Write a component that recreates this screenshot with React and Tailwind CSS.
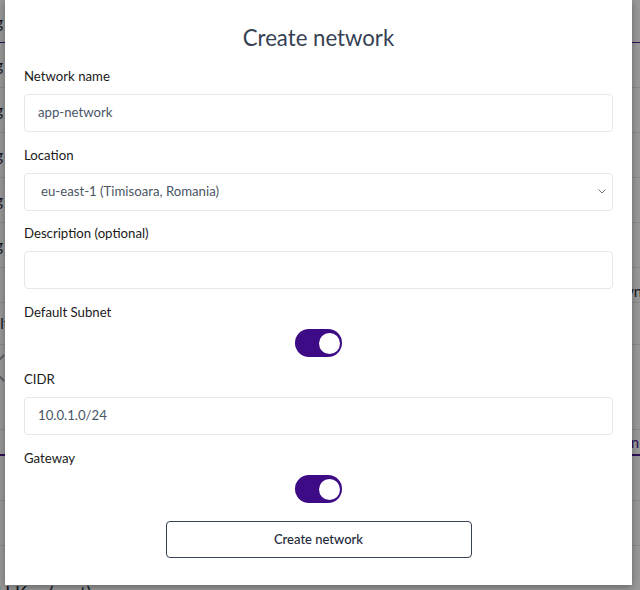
import React from 'react'

function Toggle() {
  return (
    <div className="flex justify-center">
      <div className="w-[47px] h-[28px] rounded-full bg-[#3d0b86] flex items-center justify-end pr-[2px] pt-[2px]">
        <div className="w-[21px] h-[21px] rounded-full bg-white"></div>
      </div>
    </div>
  )
}

function Field({ label, value, select }) {
  return (
    <div className="flex flex-col">
      <label className="text-[13.2px] leading-5 text-[#1a1a1a] mb-2">{label}</label>
      <div className="h-[38px] border border-gray-200 rounded flex items-center justify-between px-[13px] bg-white">
        <span className={'text-[13.2px] text-gray-600' + (select ? ' pl-[3px]' : '')}>{value}</span>
        {select && (
          <svg width="8" height="5" viewBox="0 0 8 5" className="-mr-[7px]">
            <path d="M0.5 0.5 L4 4 L7.5 0.5" fill="none" stroke="#6b7280" strokeWidth="1" />
          </svg>
        )}
      </div>
    </div>
  )
}

function Row({ left, right, className = '' }) {
  return (
    <div className={'h-[45px] border-b border-gray-200 flex items-center justify-between ' + className}>
      <span className="-ml-[40px]">{left}</span>
      <span className="-mr-[30px]">{right}</span>
    </div>
  )
}

function App() {
  return (
    <div className="relative w-[640px] h-[590px] overflow-hidden bg-white font-['Lato',sans-serif]">
      {/* page behind the dialog */}
      <div className="flex flex-col text-[15px] text-gray-800">
        <div className="h-[43px] border-b border-[#4c1d95] flex items-center pt-[2px]">
          <span className="-ml-[40px]">Config</span>
        </div>
        <Row left="Config" />
        <Row left="Config" />
        <Row left="Config" />
        <Row left="Config" />
        <Row left="Config" className="h-[44px]" />
        <div className="h-[35px] border-b border-gray-200 flex items-end justify-end">
          <span className="-mr-[30px]">Download</span>
        </div>
        <div className="h-[42px] border-b border-gray-200 flex items-center">
          <span className="-ml-[40px]">Default</span>
        </div>
        <div className="h-[85px] border-b border-gray-200 flex items-start pt-[8px]">
          <svg width="16" height="30" viewBox="0 0 16 30" className="-ml-[10px]">
            <path d="M14 2 L2 15 L14 28" fill="none" stroke="#9ca3af" strokeWidth="2" />
          </svg>
        </div>
        <div className="h-[26px] border-b-2 border-[#4c1d95] flex items-center justify-end">
          <span className="-mr-[28px] text-[#4c1d95]">Connect</span>
        </div>
        <Row left="Info" className="h-[42px]" />
        <Row left="-" className="h-[40px]" />
        <div className="pt-[32px] -ml-[23px] text-lg">SSH Key (root)</div>
      </div>
      <div className="absolute inset-0 bg-black/40"></div>

      {/* dialog */}
      <div className="absolute left-[5px] top-0 w-[627px] h-[585px] bg-white shadow-[0_2px_8px_rgba(0,0,0,0.35)] px-[19px] pt-[22px]">
        <h2 className="text-[22.2px] leading-8 text-center text-gray-700">Create network</h2>
        <div className="flex flex-col gap-[12.6px] mt-[12px]">
          <Field label="Network name" value="app-network" />
          <Field label="Location" value="eu-east-1 (Timisoara, Romania)" select />
          <Field label="Description (optional)" value="" />
          <div className="flex flex-col">
            <label className="text-[13.2px] leading-5 text-[#1a1a1a] mb-[7px]">Default Subnet</label>
            <Toggle />
          </div>
          <Field label="CIDR" value="10.0.1.0/24" />
          <div className="flex flex-col">
            <label className="text-[13.2px] leading-5 text-[#1a1a1a] mb-[7px]">Gateway</label>
            <Toggle />
          </div>
        </div>
        <div className="flex justify-center mt-[18px]">
          <button className="w-[306px] h-[37px] border border-gray-700 rounded text-[13px] font-medium text-gray-800 bg-white">
            Create network
          </button>
        </div>
      </div>
    </div>
  )
}

export default App
